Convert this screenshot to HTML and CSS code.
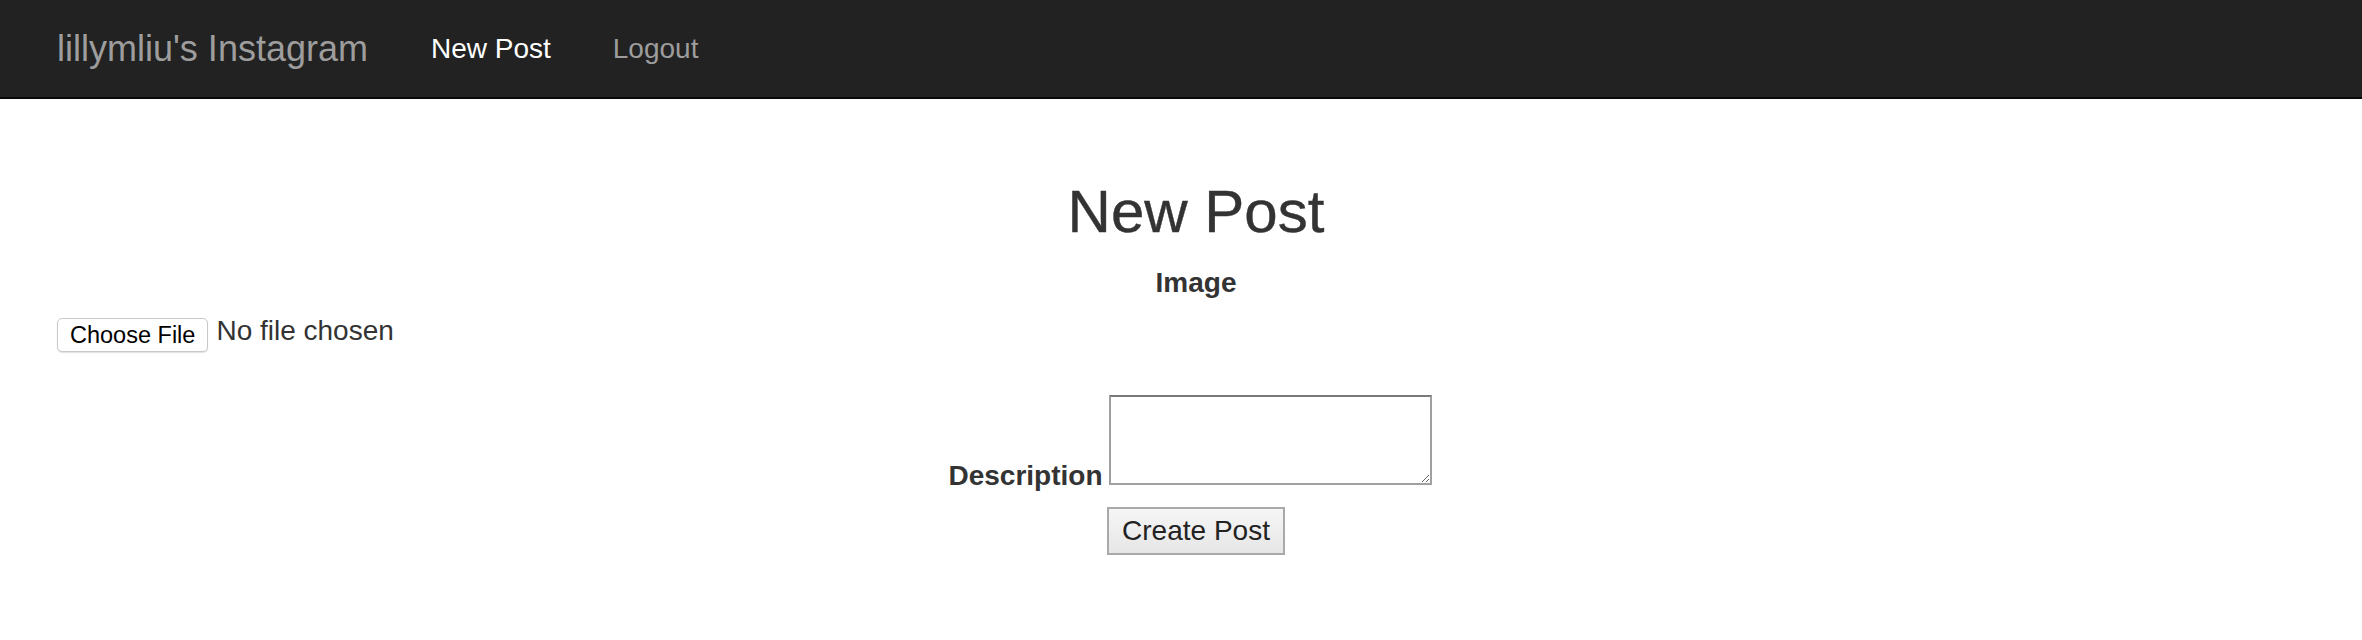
FILE: index.html
```html
<!DOCTYPE html>
<html lang="en">
<head>
<meta charset="utf-8">
<title>New Post</title>
<link rel="stylesheet" href="styles.css">
</head>
<body>
<nav class="navbar">
  <a class="brand" href="#">lillymliu's Instagram</a>
  <ul class="nav-links">
    <li><a class="nav-link active" href="#">New Post</a></li>
    <li><a class="nav-link" href="#">Logout</a></li>
  </ul>
</nav>
<main class="page">
  <h1 class="title">New Post</h1>
  <form class="post-form">
    <label class="field-label">Image</label>
    <div class="file-row">
      <button type="button" class="file-btn">Choose File</button>
      <span class="file-name">No file chosen</span>
    </div>
    <div class="desc-row">
      <label class="field-label inline">Description</label>
      <textarea class="desc-input"></textarea>
    </div>
    <div class="submit-row">
      <button type="button" class="submit-btn">Create Post</button>
    </div>
  </form>
</main>
</body>
</html>
```

FILE: styles.css
```css
html, body {
  margin: 0;
  padding: 0;
  background: #fff;
}

body {
  font-family: "Liberation Sans", Helvetica, Arial, sans-serif;
  color: #333;
}

.navbar {
  display: flex;
  align-items: center;
  height: 97px;
  background: #222;
  border-bottom: 2px solid #080808;
  padding-left: 57px;
}

.brand {
  font-size: 36px;
  color: #9d9d9d;
  text-decoration: none;
  margin-right: 63px;
}

.nav-links {
  display: flex;
  align-items: center;
  gap: 62px;
  list-style: none;
  margin: 0;
  padding: 0;
}

.nav-link {
  font-size: 28px;
  color: #9d9d9d;
  text-decoration: none;
}

.nav-link.active {
  color: #fff;
}

.page {
  padding: 0 27px 0 57px;
}

.title {
  margin: 80px 0 0;
  font-size: 60px;
  font-weight: 500;
  line-height: 66px;
  text-align: center;
  color: #333;
  -webkit-text-stroke: 0.4px #333;
}

.post-form {
  display: flex;
  flex-direction: column;
}

.field-label {
  display: block;
  margin-top: 22px;
  font-size: 28px;
  font-weight: bold;
  line-height: 32px;
  text-align: center;
  color: #333;
}

.field-label.inline {
  margin: 0 0 -5px;
  line-height: 28px;
}

.file-row {
  display: flex;
  align-items: flex-start;
  gap: 8px;
  margin-top: 16px;
}

.file-btn {
  box-sizing: border-box;
  height: 34px;
  margin-top: 3px;
  padding: 0 12px;
  font-family: "Liberation Sans", Helvetica, Arial, sans-serif;
  font-size: 23.5px;
  line-height: 32px;
  color: #000;
  background: #fff;
  border: 1px solid #c8c8c8;
  border-radius: 5px;
  box-shadow: 0 1px 1px rgba(0, 0, 0, 0.12);
}

.file-name {
  font-size: 28px;
  line-height: 32px;
  color: #333;
}

.desc-row {
  display: flex;
  justify-content: center;
  align-items: flex-end;
  gap: 6px;
  margin-top: 43px;
  padding-right: 12px;
}

.desc-input {
  box-sizing: border-box;
  width: 323px;
  height: 90px;
  margin: 0;
  padding: 2px;
  border: 2px solid #a0a0a0;
  border-top-color: #7a7a7a;
  background: #fff;
  font-family: "Liberation Sans", Helvetica, Arial, sans-serif;
  font-size: 24px;
}

.submit-row {
  display: flex;
  justify-content: center;
  margin-top: 22px;
}

.submit-btn {
  box-sizing: border-box;
  height: 48px;
  padding: 0 13px;
  font-family: "Liberation Sans", Helvetica, Arial, sans-serif;
  font-size: 28px;
  line-height: 44px;
  color: #222;
  background: linear-gradient(#f6f6f6, #e6e6e6);
  border: 2px solid #a9a9a9;
  border-radius: 0;
}
```
